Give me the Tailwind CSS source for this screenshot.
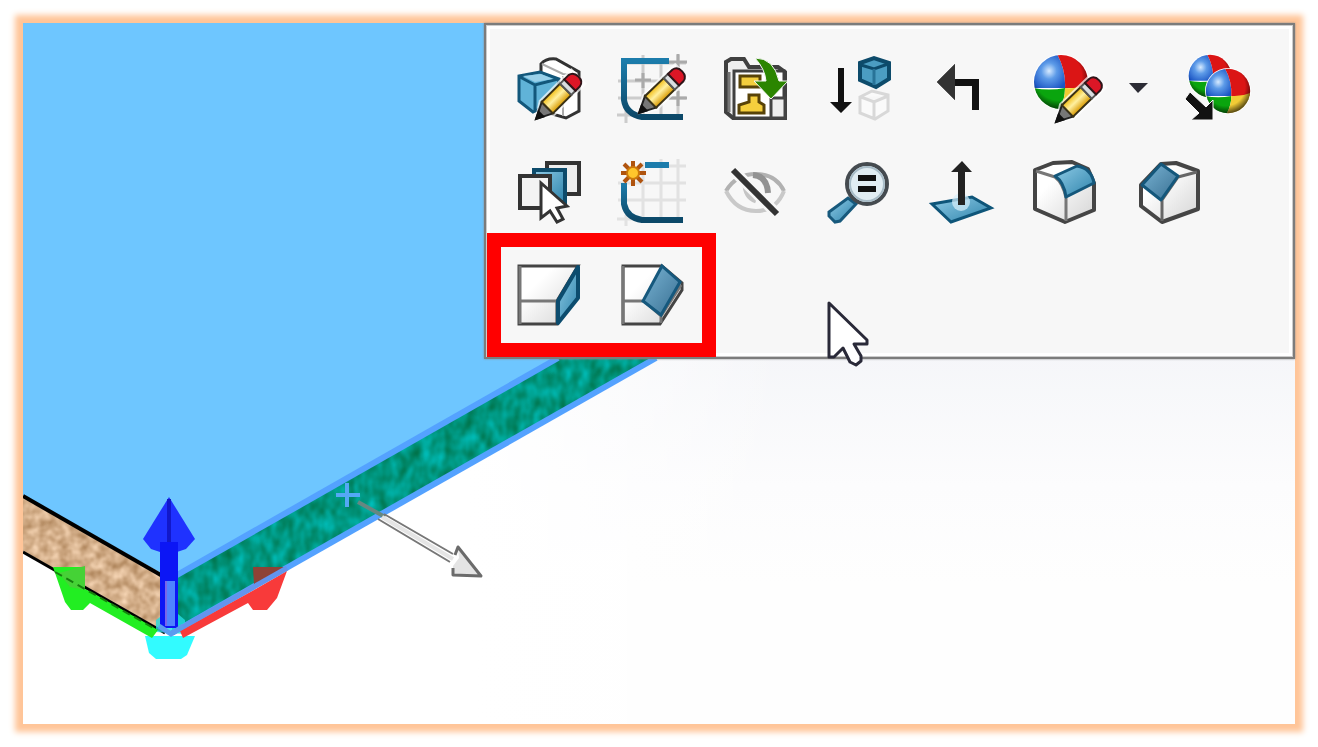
<!DOCTYPE html>
<html lang="en">
<head>
<meta charset="utf-8">
<title>CAD context toolbar</title>
<script src="https://cdn.jsdelivr.net/npm/@tailwindcss/browser@4"></script>
</head>
<body class="bg-white font-['Liberation_Sans',sans-serif]">
<svg class="absolute size-0" aria-hidden="true">
  <defs>
    <linearGradient id="blue" x1="0" y1="0" x2="1" y2="1"><stop offset="0" stop-color="#8fcbe6"/><stop offset="1" stop-color="#2d83ab"/></linearGradient>
    <linearGradient id="steel" x1="0" y1="0" x2="1" y2="1"><stop offset="0" stop-color="#7ab4d4"/><stop offset="1" stop-color="#386f92"/></linearGradient>
    <linearGradient id="gray" x1="0" y1="0" x2="1" y2="1"><stop offset="0.3" stop-color="#fff"/><stop offset="1" stop-color="#d4d4d4"/></linearGradient>
    <linearGradient id="gold" x1="0" y1="0" x2="0" y2="1"><stop offset="0" stop-color="#f2bd15"/><stop offset="0.45" stop-color="#fff0a0"/><stop offset="1" stop-color="#d99a00"/></linearGradient>
    <linearGradient id="line" x1="0" y1="0" x2="0" y2="1"><stop offset="0" stop-color="#1c7cab"/><stop offset="1" stop-color="#0c4868"/></linearGradient>
    <radialGradient id="ballblue" cx="0.5" cy="0.5" r="0.6"><stop offset="0" stop-color="#d6eaff"/><stop offset="0.4" stop-color="#5d9be8"/><stop offset="1" stop-color="#1b55c4"/></radialGradient>
    <radialGradient id="shade" cx="0.45" cy="0.4" r="0.62"><stop offset="0.7" stop-color="#000" stop-opacity="0"/><stop offset="1" stop-color="#000" stop-opacity="0.7"/></radialGradient>
    <clipPath id="disc"><circle r="27"/></clipPath>
    <g id="pencil">
      <path d="M-2 0 15-11H61V11H15Z" fill="#fff" opacity="0.7"/>
      <path d="M0 0 16-8V8Z" fill="#777" stroke="#222" stroke-width="2"/>
      <path d="M-2 0 8-5V5Z" fill="#111"/>
      <path d="M16-8H42V8H16Z" fill="url(#gold)" stroke="#3b3216" stroke-width="2"/>
      <path d="M42-8H48V8H42Z" fill="#d9dde0" stroke="#555" stroke-width="2"/>
      <path d="M48-8H54Q60-7 60 0T54 8H48Z" fill="#dc1626" stroke="#301519" stroke-width="2"/>
    </g>
    <g id="ball">
      <circle r="28" fill="#fff"/>
      <g clip-path="url(#disc)">
        <path d="M-28-28H-4Q5-12 4 6H-28Z" fill="url(#ballblue)"/>
        <path d="M-4-28H28V6H4Q5-12-4-28Z" fill="#db1515"/>
        <path d="M-28 6Q-12 9 4 6Q4 18-2 28H-28Z" fill="#0aa50e"/>
        <path d="M4 6Q16 7 28 2V28H-2Q4 18 4 6Z" fill="#f2cc35"/>
      </g>
      <circle r="27" fill="url(#shade)"/>
    </g>
  </defs>
</svg>

<main class="flex min-h-screen p-[23px]">
  <section aria-label="Model view" class="relative flex-1 bg-white shadow-[0_0_6px_8px_#ffc598]">
    <svg class="absolute inset-0 size-full" viewBox="23 23 1272 701" preserveAspectRatio="xMinYMin slice" aria-hidden="true">
      <defs>
        <linearGradient id="sky" x1="0" y1="0" x2="0" y2="1"><stop offset="0.47" stop-color="#f5f6f9"/><stop offset="0.66" stop-color="#fcfcfd"/><stop offset="0.8" stop-color="#fefefe"/></linearGradient>
        <linearGradient id="fade" x1="0" y1="0" x2="1" y2="0"><stop offset="0.35" stop-color="#fff"/><stop offset="0.6" stop-color="#fff" stop-opacity="0"/></linearGradient>
        <filter id="wood" x="0" y="0" width="1" height="1" color-interpolation-filters="sRGB"><feTurbulence type="fractalNoise" baseFrequency="0.1" numOctaves="2" seed="4"/><feColorMatrix values="0.4 0 0 0 0.63  0.45 0 0 0 0.46  0.5 0 0 0 0.29  0 0 0 0 1"/><feComposite in2="SourceGraphic" operator="in"/></filter>
        <filter id="teal" x="0" y="0" width="1" height="1" color-interpolation-filters="sRGB"><feTurbulence type="fractalNoise" baseFrequency="0.09 0.06" numOctaves="2" seed="8"/><feColorMatrix values="0 0 0 0 0  0.4 0 0 0 0.39  0.6 0 0 0 0.2  0 0 0 0 1"/><feComposite in2="SourceGraphic" operator="in"/></filter>
      </defs>
      <path fill="url(#sky)" d="M23 23H1295V724H23Z"/>
      <path fill="url(#fade)" d="M23 23H1295V724H23Z"/>
      <path d="M23 496 165 578V632L23 551Z" fill="#d2ab82" filter="url(#wood)"/>
      <path d="M172 578 560 356H655L172 632Z" fill="#009b80" filter="url(#teal)"/>
      <path d="M23 23H700V278L170 578 23 495Z" fill="#6ec6ff"/>
      <path d="M170 579 558 358" stroke="#54a2ff" stroke-width="6"/>
      <path d="M172 633 656 358" stroke="#54a2ff" stroke-width="6"/>
      <path d="M23 496 166 578" stroke="#000" stroke-width="4"/>
      <path d="M23 552 165 633" stroke="#000" stroke-width="3"/>
      <path d="M145 636H195L187 655 181 659H156L149 653Z" fill="#32fbff"/>
      <path d="M156 632V620L164 614H178L185 620V634Z" fill="#26dce2" opacity="0.8"/>
      <path d="M53 567H85V589L93 593 158 630 152 638 90 603 83 610H71L65 602Z" fill="#22ee22"/>
      <path d="M59 573 85 566V590L70 587Z" fill="#45d236"/>
      <path d="M55 572 157 630" stroke="#16800e" stroke-width="2" stroke-dasharray="8 5"/>
      <path d="M287 571 277 598 267 610H253L248 603 183 638 180 631 254 590Z" fill="#f83a3a"/>
      <path d="M253 567H285L254 585Z" fill="#8e4236"/>
      <path d="M172 633 287 568" stroke="#6394ee" stroke-width="5"/>
      <path d="M169 497 195 539 186 549 177 552H160L151 549 143 539Z" fill="#1f32ff"/>
      <path d="M160 542H178V628H160Z" fill="#0c16f5"/>
      <path d="M169 499V542" stroke="#1218ca" stroke-width="4"/>
      <path d="M166 581H175V626H166Z" fill="#4f83ff"/>
      <path d="M166 581V626" stroke="#7966e9" stroke-width="2"/>
      <path d="M159 626 171 634 183 626" fill="none" stroke="#5c9cef" stroke-width="5"/>
      <path d="M347 483V507M336 495H360" stroke="#54a8f5" stroke-width="4"/>
      <path d="M358 502 385 517" stroke="#668781" stroke-width="4"/>
      <path d="M384 514 453 554M378 519 450 562" stroke="#777" stroke-width="2"/>
      <path d="M382 517 453 559" stroke="#e5e5e5" stroke-width="4"/>
      <path d="M458 547 481 576 453 575 453 566 459 558Z" fill="#e4e4e4"/>
      <path d="M455 555 458 547 481 576 453 575 453 568" fill="none" stroke="#6b6b6b" stroke-width="3" stroke-linejoin="round"/>
    </svg>

    <div role="toolbar" aria-label="Context toolbar" class="relative ml-auto w-[811px] max-w-full border-2 border-[#7c7c7c] bg-[#f7f7f7] pt-[14px] pb-[9px] pl-[11px] shadow-[inset_0_0_0_1px_#ccc,inset_0_0_0_4px_#fff,0_0_2px_#8c8c8c]">
      <div class="flex">
        <button aria-label="Edit feature" class="size-[103px]"><svg class="size-full" viewBox="497 38 103 103">
          <path d="M541 72V63Q546 57 556 58L579 71V110L566 117 549 112Z" fill="#fff" stroke="#333" stroke-width="3"/><path d="M542 63 563 73 578 74M563 75V115" fill="none" stroke="#aaa" stroke-width="2"/>
          <path d="M519 75 540 71 559 78 556 100 533 111 519 100Z" fill="#60b3d8" stroke="#12577b" stroke-width="3"/><path d="M520 76 535 84 558 78M535 84V109" fill="none" stroke="#12577b" stroke-width="3"/><path d="M523 75 541 73 553 78 535 81Z" fill="#99d0e9"/>
          <use href="#pencil" transform="translate(536 118) rotate(-45)"/></svg></button>
        <button aria-label="Edit sketch" class="size-[103px]"><svg class="size-full" viewBox="600 38 103 103" fill="none">
          <path d="M643 54V119M661 60V119M678 54V114M618 80H686M618 97H686M626 62H686M626 108V122M617 114H634" stroke="#ccc" stroke-width="3"/><path d="M669 61H687M678 53V69M635 79H651M643 72V87M669 97H687M678 90V105" stroke="#aaa" stroke-width="3"/>
          <path d="M669 60H624V99Q626 113 642 116H683" stroke="url(#line)" stroke-width="6"/>
          <use href="#pencil" transform="translate(639 112) rotate(-44)"/></svg></button>
        <button aria-label="Open component" class="size-[103px]"><svg class="size-full" viewBox="703 38 103 103">
          <path d="M726 61 731 58H744L749 66H778L785 71V117H733L726 111Z" fill="#eee" stroke="#404040" stroke-width="4"/><path d="M734 70H784V117H734Z" fill="#fff" stroke="#404040" stroke-width="3"/><path d="M771 97H785V117H771Z" fill="#eee" stroke="#444" stroke-width="3"/><path d="M729 71V111" stroke="#777" stroke-width="3"/>
          <path d="M740 75H760V86H740Z" fill="#f3ce3d" stroke="#584308" stroke-width="3"/><path d="M749 94H759V101L764 104V112H739V104L749 101Z" fill="#f5cf3d" stroke="#584308" stroke-width="3"/>
          <path d="M755 57Q774 57 779 80H788L771 98 754 80H766Q765 68 755 57Z" fill="#2b8500" stroke="#f7f7f7" stroke-width="1"/></svg></button>
        <button aria-label="Move down in tree" class="size-[103px]"><svg class="size-full" viewBox="806 38 103 103">
          <path d="M838 67H844V101H852L841 112 830 101H838Z" fill="#111"/>
          <path d="M860 62 874 57 889 62V78L876 86 860 79Z" fill="#4b9dc2" stroke="#0d4b6b" stroke-width="4"/><path d="M861 64 874 68 888 63" fill="none" stroke="#0d4b6b" stroke-width="3"/><path d="M874 68V84" stroke="#287398" stroke-width="3"/>
          <path d="M860 96 872 90 888 94V110L875 118 860 112ZM861 96 874 101 888 95M874 101V117" fill="#fafafa" stroke="#d8d8d8" stroke-width="3"/></svg></button>
        <button aria-label="Undo" class="size-[103px]"><svg class="size-full" viewBox="909 38 103 103">
          <path d="M937 81 955 63V78H979V109H972V85H955V99Z" fill="#111"/><path d="M937 81 955 63V99Z" fill="#333"/></svg></button>
        <button aria-label="Appearances" class="size-[103px]"><svg class="size-full" viewBox="1012 38 103 103">
          <use href="#ball" transform="translate(1061 81)"/><use href="#pencil" transform="translate(1056 121) rotate(-44)"/></svg></button>
        <button aria-label="More appearance options" class="h-[103px] w-[47px]"><svg class="size-full" viewBox="1115 38 47 103">
          <path d="M1129 82H1148L1138 92Z" fill="#2c2c35"/></svg></button>
        <button aria-label="Copy appearance" class="size-[103px]"><svg class="size-full" viewBox="1162 38 103 103">
          <use href="#ball" transform="translate(1210 75) scale(0.79)"/><use href="#ball" transform="translate(1228 90) scale(0.82)"/>
          <path d="M1190 91 1206 106 1213 99V119H1191L1199 112 1185 98Z" fill="#111" stroke="#f7f7f7" stroke-width="1"/></svg></button>
      </div>
      <div class="flex">
        <button aria-label="Select other" class="size-[103px]"><svg class="size-full" viewBox="497 141 103 103" stroke-width="4">
          <path d="M547 162H579V193H547Z" fill="#eee" stroke="#333"/><path d="M534 169H565V201H534Z" fill="url(#blue)" stroke="#0d4b6b"/><path d="M520 175H550V207H520Z" fill="#f3f3f3" stroke="#333"/>
          <path d="M541 182V217L550 210 557 221 563 218 557 207 567 205Z" fill="#fff" stroke="#333" stroke-width="3"/></svg></button>
        <button aria-label="New sketch" class="size-[103px]"><svg class="size-full" viewBox="600 141 103 103" fill="none">
          <path d="M643 162V220M661 158V220M678 158V216M618 182H686M618 199H686M668 165H686M626 214V225M617 218H634" stroke="#e2e2e2" stroke-width="3"/>
          <path d="M645 164H669" stroke="#1c7cab" stroke-width="6"/><path d="M624 182V203Q627 217 642 219H683" stroke="url(#line)" stroke-width="6"/>
          <path d="M633 160V185M621 172H646M624 163 642 181M642 163 624 181" stroke="#b0540f" stroke-width="4"/><circle cx="633" cy="172" r="6" fill="#ffc62c" stroke="#cc790b" stroke-width="2"/></svg></button>
        <button aria-label="Hide" class="size-[103px]"><svg class="size-full" viewBox="703 141 103 103" fill="none">
          <path d="M726 190Q736 173 756 173T784 190" stroke="#b1b1b1" stroke-width="4"/><path d="M726 190Q736 210 756 210T784 190" stroke="#c9c9c9" stroke-width="4"/><path d="M745 182Q745 196 756 200" stroke="#c5c5c5" stroke-width="5"/><path d="M753 174Q767 175 768 192" stroke="#929292" stroke-width="6"/>
          <path d="M733 169 777 213" stroke="#f7f7f7" stroke-width="11"/><path d="M733 169 777 213" stroke="#333" stroke-width="6"/></svg></button>
        <button aria-label="Zoom to selection" class="size-[103px]"><svg class="size-full" viewBox="806 141 103 103">
          <path d="M848 197 856 203 840 220 835 221 829 215V211Z" fill="url(#blue)" stroke="#17597c" stroke-width="3"/><circle cx="867" cy="183" r="20" fill="#e1edf3" stroke="#454b50" stroke-width="4"/><circle cx="867" cy="183" r="17" fill="none" stroke="#a9bdc8" stroke-width="2"/><path d="M858 174H876V180H858ZM858 185H876V191H858Z" fill="#111"/></svg></button>
        <button aria-label="Normal to" class="size-[103px]"><svg class="size-full" viewBox="909 141 103 103">
          <path d="M932 203 972 196 991 207 951 221Z" fill="url(#blue)" stroke="#0e5579" stroke-width="3"/><circle cx="961" cy="201" r="9" fill="#d7f0fb" opacity="0.7"/><path d="M958 204V171H951L962 160 972 171H965V204Z" fill="#222"/></svg></button>
        <button aria-label="Fillet" class="size-[103px]"><svg class="size-full" viewBox="1012 141 103 103" stroke-linejoin="round">
          <path d="M1035 169 1053 162 1072 161 1088 168 1094 182V209L1065 221 1035 208Z" fill="url(#gray)" stroke="#454545" stroke-width="4"/><path d="M1036 170 1055 176Q1063 182 1066 197V220" fill="none" stroke="#777" stroke-width="3"/>
          <path d="M1055 175 1077 165Q1091 167 1094 182L1066 196Q1064 181 1055 175Z" fill="url(#blue)" stroke="#14577b" stroke-width="3"/></svg></button>
        <button aria-label="Chamfer" class="size-[103px]"><svg class="size-full" viewBox="1115 141 103 103" stroke-linejoin="round">
          <path d="M1161 163 1176 162 1198 170V208L1162 221 1141 205V184Z" fill="url(#gray)" stroke="#454545" stroke-width="4"/><path d="M1197 171 1178 176 1162 199V220" fill="none" stroke="#666" stroke-width="3"/>
          <path d="M1161 163 1178 175 1161 199 1142 184Z" fill="url(#steel)" stroke="#14577b" stroke-width="3"/></svg></button>
      </div>
      <div class="flex">
        <button aria-label="Face draft" class="size-[103px]"><svg class="size-full" viewBox="497 244 103 103">
          <path d="M519 265H578L557 300V323H519Z" fill="url(#gray)" stroke="#444" stroke-width="3"/><path d="M519 300H557" stroke="#777" stroke-width="3"/><path d="M520 265V323" stroke="#777" stroke-width="3"/>
          <path d="M578 266V297L558 322V300Z" fill="url(#blue)" stroke="#0c4c6e" stroke-width="4" stroke-linejoin="round"/></svg></button>
        <button aria-label="Edge chamfer" class="size-[103px]"><svg class="size-full" viewBox="600 244 103 103">
          <path d="M623 265H662L682 282V289L660 323H623Z" fill="url(#gray)" stroke="#444" stroke-width="3"/><path d="M623 300H644L661 315V322M661 315 681 284" fill="none" stroke="#777" stroke-width="3"/><path d="M623 265V323" stroke="#777" stroke-width="3"/>
          <path d="M662 265 680 281 661 314 643 300Z" fill="url(#steel)" stroke="#15587d" stroke-width="3"/></svg></button>
      </div>
      <div class="pointer-events-none absolute bottom-0 left-px h-[124px] w-[229px] border-[14px] border-[#f00]"></div>
      <svg class="pointer-events-none absolute -bottom-3 left-[341px] h-[70px] w-[45px]" viewBox="827 299 45 70" aria-hidden="true">
        <path d="M829 303V357H834L843 348 850 362 856 365 861 361V356L854 344H867V340Z" fill="#fff" stroke="#292938" stroke-width="3" stroke-linejoin="round"/></svg>
    </div>
  </section>
</main>
</body>
</html>
